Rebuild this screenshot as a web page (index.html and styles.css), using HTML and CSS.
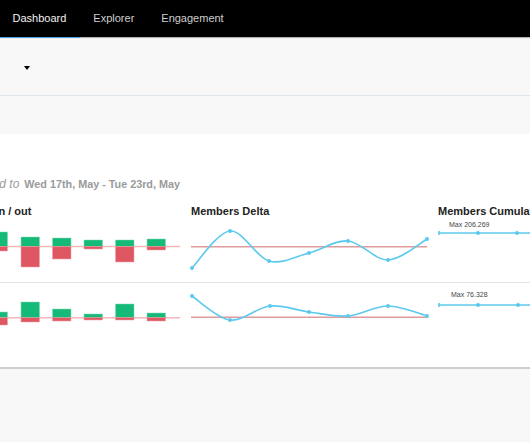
FILE: index.html
```html
<!DOCTYPE html>
<html>
<head>
<meta charset="utf-8">
<link rel="stylesheet" href="styles.css">
</head>
<body>
<nav class="nav">
  <a class="tab active">Dashboard</a>
  <a class="tab">Explorer</a>
  <a class="tab">Engagement</a>
</nav>
<div class="toolbar">
  <span class="caret"></span>
</div>
<section class="card">
  <div class="inner">
    <div class="range"><i>Compared to</i> Wed 17th, May - Tue 23rd, May</div>
    <div class="heads">
      <div class="head first">Members in / out</div>
      <div class="head">Members Delta</div>
      <div class="head">Members Cumulative</div>
    </div>
    <div class="row r1">
      <div class="cell">
        <svg width="236" height="63" viewBox="0 0 236 63">
          <line x1="0" y1="26.5" x2="236" y2="26.5" class="base"/>
          <rect class="g" x="14" y="4" width="18.5" height="22.5"/><rect class="r" x="14" y="26.5" width="18.5" height="8"/>
          <rect class="g" x="45" y="12" width="18.5" height="14.5"/><rect class="r" x="45" y="26.5" width="18.5" height="4.5"/>
          <rect class="g" x="77" y="17" width="18.5" height="9.5"/><rect class="r" x="77" y="26.5" width="18.5" height="20.5"/>
          <rect class="g" x="108.5" y="18" width="18.5" height="8.5"/><rect class="r" x="108.5" y="26.5" width="18.5" height="12.5"/>
          <rect class="g" x="140" y="20" width="18.5" height="6.5"/><rect class="r" x="140" y="26.5" width="18.5" height="2.5"/>
          <rect class="g" x="171.5" y="20" width="18.5" height="6.5"/><rect class="r" x="171.5" y="26.5" width="18.5" height="15.5"/>
          <rect class="g" x="203" y="19" width="18.5" height="7.5"/><rect class="r" x="203" y="26.5" width="18.5" height="3.5"/>
        </svg>
      </div>
      <div class="cell">
        <svg width="236" height="63" viewBox="0 0 236 63">
          <line x1="0" y1="26.7" x2="236" y2="26.7" class="ref"/>
          <path class="ln" d="M1,48 C7.3,41.8 26.2,12.2 39,11 C51.8,9.8 64.8,37.3 78,41 C91.2,44.7 104.8,36.3 118,33 C131.2,29.7 143.8,19.8 157,21 C170.2,22.2 183.8,40.3 197,40 C210.2,39.7 229.5,22.5 236,19"/>
          <circle class="pt" cx="1" cy="48" r="2"/><circle class="pt" cx="39" cy="11" r="2"/><circle class="pt" cx="78" cy="41" r="2"/><circle class="pt" cx="118" cy="33" r="2"/><circle class="pt" cx="157" cy="21" r="2"/><circle class="pt" cx="197" cy="40" r="2"/><circle class="pt" cx="236" cy="19" r="2"/>
        </svg>
      </div>
      <div class="cell">
        <svg width="236" height="63" viewBox="0 0 236 63">
          <text x="11" y="6.5" class="max">Max 206.269</text>
          <line x1="1" y1="13" x2="236" y2="13" class="lnf"/>
          <line x1="1" y1="11" x2="1" y2="15" class="lnf"/>
          <circle class="pt" cx="40" cy="13" r="2"/><circle class="pt" cx="79" cy="13" r="2"/><circle class="pt" cx="118" cy="13" r="2"/>
        </svg>
      </div>
    </div>
    <div class="row r2">
      <div class="cell">
        <svg width="236" height="62" viewBox="0 0 236 62">
          <line x1="0" y1="34.7" x2="236" y2="34.7" class="base"/>
          <rect class="g" x="14" y="25" width="18.5" height="9.7"/><rect class="r" x="14" y="34.7" width="18.5" height="3"/>
          <rect class="g" x="45" y="29" width="18.5" height="5.7"/><rect class="r" x="45" y="34.7" width="18.5" height="7.3"/>
          <rect class="g" x="77" y="19" width="18.5" height="15.7"/><rect class="r" x="77" y="34.7" width="18.5" height="4.3"/>
          <rect class="g" x="108.5" y="26" width="18.5" height="8.7"/><rect class="r" x="108.5" y="34.7" width="18.5" height="3.3"/>
          <rect class="g" x="140" y="31" width="18.5" height="3.7"/><rect class="r" x="140" y="34.7" width="18.5" height="2.3"/>
          <rect class="g" x="171.5" y="21" width="18.5" height="13.7"/><rect class="r" x="171.5" y="34.7" width="18.5" height="2.3"/>
          <rect class="g" x="203" y="30" width="18.5" height="4.7"/><rect class="r" x="203" y="34.7" width="18.5" height="3.3"/>
        </svg>
      </div>
      <div class="cell">
        <svg width="236" height="62" viewBox="0 0 236 62">
          <line x1="0" y1="34.3" x2="236" y2="34.3" class="ref"/>
          <path class="ln" d="M1,13 C7.3,17 26,35.3 39,37 C52,38.7 65.8,24.3 79,23 C92.2,21.7 105,27.3 118,29 C131,30.7 143.8,34 157,33 C170.2,32 183.8,23 197,23 C210.2,23 229.5,31.3 236,33"/>
          <circle class="pt" cx="1" cy="13" r="2"/><circle class="pt" cx="39" cy="37" r="2"/><circle class="pt" cx="79" cy="23" r="2"/><circle class="pt" cx="118" cy="29" r="2"/><circle class="pt" cx="157" cy="33" r="2"/><circle class="pt" cx="197" cy="23" r="2"/><circle class="pt" cx="236" cy="33" r="2"/>
        </svg>
      </div>
      <div class="cell">
        <svg width="236" height="62" viewBox="0 0 236 62">
          <text x="13" y="14" class="max">Max 76.328</text>
          <line x1="1" y1="22" x2="236" y2="22" class="lnf"/>
          <line x1="1" y1="20" x2="1" y2="24" class="lnf"/>
          <circle class="pt" cx="40" cy="22" r="2"/><circle class="pt" cx="80" cy="22" r="2"/><circle class="pt" cx="119" cy="22" r="2"/>
        </svg>
      </div>
    </div>
  </div>
</section>
</body>
</html>
```
FILE: styles.css
```css
* { box-sizing: border-box; }
html, body { margin: 0; padding: 0; }
body {
  background: #f8f8f8;
  font-family: "Liberation Sans", Arial, sans-serif;
  overflow: hidden;
}
.nav {
  display: flex;
  align-items: flex-start;
  height: 38px;
  background: #000;
  border-bottom: 1px solid #b5b5b5;
  padding-left: 0;
  margin-left: -1px;
}
.tab {
  display: block;
  height: 38px;
  line-height: 37px;
  padding: 0 13.5px;
  font-size: 11px;
  color: #cfcfcf;
}
.tab.active {
  color: #f2f2f2;
  border-bottom: 1px solid #4ba6e8;
}
.toolbar {
  height: 58px;
  border-top: 1px solid #ececec;
  border-bottom: 1px solid #dde5ea;
  background: #f8f8f8;
  display: flex;
  align-items: center;
  padding-left: 24px;
}
.caret {
  width: 0; height: 0;
  border-left: 3.5px solid transparent;
  border-right: 3.5px solid transparent;
  border-top: 4px solid #000;
  margin-top: 1px;
}
.card {
  margin-top: 38px;
  background: #fff;
  border-bottom: 2px solid #cfcfcf;
  padding: 42px 0 22px;
  overflow: hidden;
}
.inner { margin-left: -56px; width: 740px; }
.range {
  height: 16px;
  line-height: 16px;
  font-size: 10.8px;
  font-weight: bold;
  color: #9a9a9a;
  margin-left: 6px;
  white-space: nowrap;
}
.range i { font-weight: normal; font-size: 12px; margin-right: 2px; }
.heads {
  display: flex;
  gap: 11px;
  margin-top: 11px;
  height: 16px;
  line-height: 16px;
}
.head {
  width: 236px;
  font-size: 11px;
  font-weight: bold;
  color: #222;
  white-space: nowrap;
}
.row { display: flex; gap: 11px; }
.row.r1 { height: 64px; padding-top: 1px; border-bottom: 1px solid #e4e4e4; }
.row.r2 { height: 62px; }
.cell { width: 236px; }
.cell svg { display: block; overflow: visible; }
.base { stroke: #f6b8b4; stroke-width: 1.5; }
.ref { stroke: #df9a9c; stroke-width: 1.5; }
.g { fill: #15b978; stroke: #7fdcb6; stroke-width: 0.5; }
.r { fill: #df5763; stroke: #f0a0a6; stroke-width: 0.5; }
.ln { fill: none; stroke: #5ccaee; stroke-width: 1.6; }
.lnf { stroke: #5ccaee; stroke-width: 1.6; }
.pt { fill: #5ccaee; }
.max { font-family: "Liberation Sans", Arial, sans-serif; font-size: 7px; fill: #444; }
```
